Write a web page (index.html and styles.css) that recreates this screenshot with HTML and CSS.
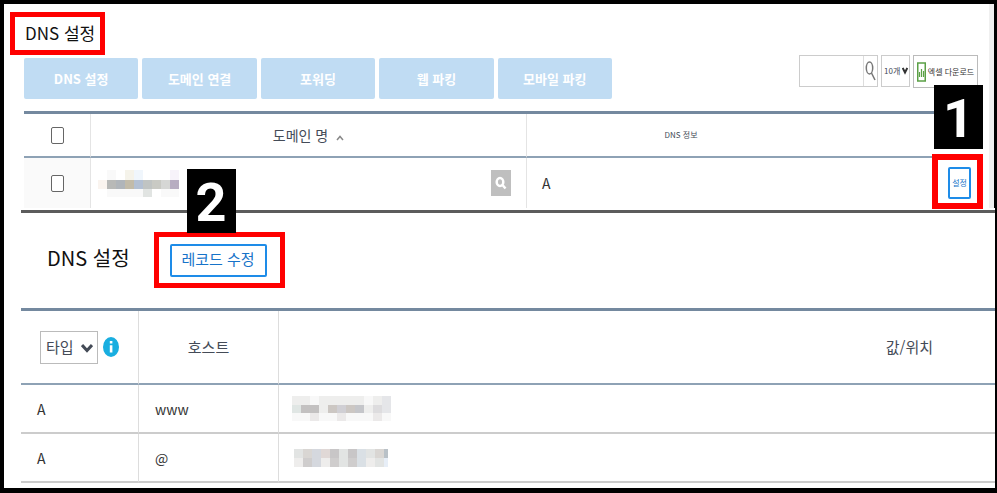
FILE: index.html
```html
<!DOCTYPE html>
<html lang="ko">
<head>
    <meta charset="UTF-8">
    <meta name="viewport" content="width=device-width, initial-scale=1.0">
    <title>DNS 설정</title>
    <link rel="stylesheet" href="styles.css">
</head>
<body>
    <main class="guide">
        <section class="panel domains">
            <h1 class="title highlight">DNS 설정</h1>
            <div class="toolbar">
                <div class="actions">
                    <button type="button" class="action">DNS 설정</button>
                    <button type="button" class="action">도메인 연결</button>
                    <button type="button" class="action">포워딩</button>
                    <button type="button" class="action">웹 파킹</button>
                    <button type="button" class="action">모바일 파킹</button>
                </div>
                <div class="tools">
                    <form class="search">
                        <input type="text" class="search-input" aria-label="검색어">
                        <button type="button" class="search-button" aria-label="검색">
                            <svg width="11" height="22" viewBox="0 0 11 22" fill="none" stroke="#777" stroke-width="1.5">
                                <ellipse cx="4.5" cy="8" rx="3.2" ry="6"/>
                                <path d="M6.5 13L10 20"/>
                            </svg>
                        </button>
                    </form>
                    <div class="select count">
                        <select aria-label="목록 개수">
                            <option>10개</option>
                        </select>
                        <svg width="6" height="8" viewBox="0 0 6 8" fill="none" stroke="#333" stroke-width="2">
                            <path d="M0.7 1L3 5.5L5.3 1"/>
                        </svg>
                    </div>
                    <button type="button" class="excel">
                        <svg width="9" height="20" viewBox="0 0 9 20">
                            <rect x="0.75" y="1" width="7.5" height="18" fill="#fff" stroke="#5ba046" stroke-width="1.5"/>
                            <path d="M2.5 15V10M4.5 15V7M6.5 15V9" stroke="#5ba046" stroke-width="1.2"/>
                        </svg>
                        엑셀 다운로드
                    </button>
                </div>
            </div>
            <table class="domain-table">
                <colgroup>
                    <col class="col-check">
                    <col class="col-name">
                    <col class="col-dns">
                    <col>
                </colgroup>
                <thead>
                    <tr>
                        <th><input type="checkbox" aria-label="전체 선택"></th>
                        <th>
                            도메인 명
                            <svg class="sort" width="8" height="6" viewBox="0 0 8 6" fill="none" stroke="#888" stroke-width="1.5">
                                <path d="M1 5L4 1.5L7 5"/>
                            </svg>
                        </th>
                        <th class="small">DNS 정보</th>
                        <th></th>
                    </tr>
                </thead>
                <tbody>
                    <tr>
                        <td class="check"><input type="checkbox" aria-label="도메인 선택"></td>
                        <td>
                            <div class="domain">
                                <svg width="81" height="27" viewBox="0 0 81 27" shape-rendering="crispEdges">
                                    <path fill="#f9f9f9" d="M9 0h9v27H9zM18 19h27v8H18zM63 19h18v8H63z"/>
                                    <path fill="#f5f3ea" d="M27 0h9v10h-9z"/>
                                    <path fill="#f0f6fc" d="M36 0h9v10h-9z"/>
                                    <path fill="#f7f3fa" d="M72 0h9v10h-9z"/>
                                    <path fill="#faf4ef" d="M0 10h9v9H0z"/>
                                    <path fill="#b8b9b7" d="M9 10h9v9H9z"/>
                                    <path fill="#b0b5ba" d="M18 10h9v9h-9z"/>
                                    <path fill="#c2bba9" d="M27 10h9v9h-9z"/>
                                    <path fill="#b3c0d3" d="M36 10h9v9h-9z"/>
                                    <path fill="#c0c4c3" d="M45 10h9v9h-9z"/>
                                    <path fill="#c9cac4" d="M54 10h9v9h-9z"/>
                                    <path fill="#d6d7d5" d="M63 10h9v9h-9z"/>
                                    <path fill="#b7adc1" d="M72 10h9v9h-9z"/>
                                    <path fill="#e1e4e2" d="M45 19h9v8h-9z"/>
                                </svg>
                                <button type="button" class="lookup" aria-label="조회">
                                    <svg width="12" height="14" viewBox="0 0 12 14" fill="none" stroke="#fff" stroke-width="2.5">
                                        <ellipse cx="5" cy="6" rx="3.3" ry="4"/>
                                        <path d="M7.5 9L10.5 12.5"/>
                                    </svg>
                                </button>
                            </div>
                        </td>
                        <td class="dns">A</td>
                        <td class="setting">
                            <span class="callout">
                                <button type="button" class="outline small">설정</button>
                                <span class="step step-one">1</span>
                            </span>
                        </td>
                    </tr>
                </tbody>
            </table>
        </section>

        <section class="records">
            <header class="records-head">
                <h2 class="title">DNS 설정</h2>
                <div class="edit highlight">
                    <button type="button" class="outline">레코드 수정</button>
                    <span class="step step-two">2</span>
                </div>
            </header>
            <table class="record-table">
                <colgroup>
                    <col class="col-type">
                    <col class="col-host">
                    <col>
                </colgroup>
                <thead>
                    <tr>
                        <th>
                            <div class="type">
                                <div class="select">
                                    <select aria-label="타입">
                                        <option>타입</option>
                                    </select>
                                    <svg width="12" height="10" viewBox="0 0 12 10" fill="none" stroke="#444b57" stroke-width="3">
                                        <path d="M1 2L6 7.5L11 2"/>
                                    </svg>
                                </div>
                                <svg width="16" height="20" viewBox="0 0 16 20">
                                    <ellipse cx="8" cy="10" rx="8" ry="10" fill="#19aee0"/>
                                    <path d="M6.8 4h2.6v2.6H6.8zM6.8 8.2h2.6v7.300H6.8z" fill="#fff"/>
                                </svg>
                            </div>
                        </th>
                        <th>호스트</th>
                        <th class="value">값/위치</th>
                    </tr>
                </thead>
                <tbody>
                    <tr>
                        <td>A</td>
                        <td>www</td>
                        <td>
                            <svg width="99" height="25" viewBox="0 0 99 25" shape-rendering="crispEdges">
                                <path fill="#eeeeed" d="M0 0h99v17H0z"/>
                                <path fill="#f8f8f8" d="M0 17h99v8H0zM18 0h9v9h-9zM72 0h9v9h-9z"/>
                                <path fill="#e0e6e4" d="M0 9h9v8H0z"/>
                                <path fill="#c3c1c1" d="M9 9h18v8H9z"/>
                                <path fill="#ccc7c3" d="M36 9h9v8h-9zM54 9h9v8h-9z"/>
                                <path fill="#d0cfd4" d="M45 9h9v8h-9z"/>
                                <path fill="#c5c6ca" d="M63 9h9v8h-9z"/>
                                <path fill="#dddcde" d="M81 9h9v8h-9z"/>
                                <path fill="#e5e6e9" d="M90 0h9v17h-9z"/>
                                <path fill="#ebe9e9" d="M18 17h9v8h-9zM45 17h9v8h-9zM81 17h9v8h-9z"/>
                            </svg>
                        </td>
                    </tr>
                    <tr>
                        <td>A</td>
                        <td>@</td>
                        <td>
                            <svg width="96" height="18" viewBox="-2 0 96 18" shape-rendering="crispEdges">
                                <path fill="#e2e4e3" d="M0 0h94v18H0z"/>
                                <path fill="#d9d6d3" d="M9 0h9v9H9zM81 0h9v9h-9z"/>
                                <path fill="#d5d8de" d="M18 0h9v18h-9z"/>
                                <path fill="#e0d8d6" d="M27 0h9v9h-9z"/>
                                <path fill="#c8c6c7" d="M36 0h9v9h-9zM54 0h9v9h-9z"/>
                                <path fill="#cfcdcd" d="M9 9h9v9H9zM36 9h9v9h-9zM54 9h9v9h-9z"/>
                                <path fill="#eeedec" d="M0 9h9v9H0zM27 9h9v9h-9zM72 9h9v9h-9z"/>
                                <path fill="#dae0e5" d="M63 0h9v18h-9z"/>
                                <path fill="#b9c1c7" d="M90 0h4v9h-4z"/>
                                <path fill="#e7eef7" d="M90 9h4v9h-4z"/>
                            </svg>
                        </td>
                    </tr>
                </tbody>
            </table>
        </section>
    </main>
</body>
</html>
```
FILE: styles.css
```css
* {
    box-sizing: border-box;
}
body {
    margin: 0;
    background-color: #000;
    color: #333;
    font-family: "Noto Sans CJK KR", sans-serif;
    font-size: 14px;
    line-height: 20px;
}
button, select, input {
    font: inherit;
    margin: 0;
    padding: 0;
}
button {
    cursor: pointer;
}
svg {
    display: block;
    flex: none;
}
table {
    width: 100%;
    border-collapse: separate;
    border-spacing: 0;
    table-layout: fixed;
}
th {
    font-weight: 400;
    color: #444b57;
}
th, td {
    padding: 0;
}
.guide {
    margin: 4px 2px 4px 4px;
    padding-bottom: 5px;
    background: #fff;
}
.title {
    margin: 0;
    color: #111;
    font-size: 20px;
    font-weight: 400;
}
.highlight {
    border: 5px solid #f00;
}
.small {
    font-size: 8px;
}

/* Domain list */
.domains {
    margin-right: 1px;
    padding: 8px 11px 0 20px;
    border-right: 5px solid #f0f0f0;
    box-shadow: 1px 0 #000;
}
.domains .title {
    width: 95px;
    margin-left: -14px;
    padding: 6px 0 7px 10px;
    font-size: 17px;
    white-space: nowrap;
}
.toolbar {
    display: flex;
    justify-content: space-between;
    align-items: flex-start;
    margin: 3px 0 12px;
}
.actions {
    display: flex;
    gap: 4px;
    width: 588px;
}
.action {
    flex: 1;
    height: 41px;
    border: none;
    border-radius: 2px;
    background: #c0dcf3;
    color: #fff;
    font-size: 13px;
    font-weight: 700;
}
.tools {
    display: flex;
    gap: 3px;
    margin-top: -3px;
}
.search {
    display: flex;
    width: 79px;
    height: 32px;
    border: 1px solid #ccc;
}
.search-input {
    flex: 1;
    min-width: 0;
    border: none;
}
.search-button {
    display: flex;
    justify-content: center;
    align-items: center;
    width: 14px;
    border: none;
    border-left: 1px solid #ddd;
    background: #fff;
}
.select {
    position: relative;
}
.select select {
    appearance: none;
    width: 58px;
    height: 33px;
    padding-left: 5px;
    border: 1px solid #bbb;
    border-radius: 0;
    background: #fff;
    color: #444b57;
}
.select svg {
    position: absolute;
    top: 12px;
    right: 5px;
    pointer-events: none;
}
.count select {
    width: 29px;
    height: 32px;
    padding-left: 2px;
    border-color: #ccc;
    font-size: 8px;
}
.count svg {
    right: 2px;
}
.excel {
    display: flex;
    justify-content: center;
    align-items: center;
    gap: 2px;
    width: 65px;
    height: 33px;
    border: 1px solid #bbb;
    background: #fff;
    color: #333;
    font-size: 8px;
    white-space: nowrap;
}
.domain-table {
    border-top: 3px solid #74899f;
}
.col-check {
    width: 67px;
}
.col-name {
    width: 436px;
}
.col-dns {
    width: 308px;
}
.domain-table th {
    height: 44px;
    border-bottom: 2px solid #8ea2b5;
}
.domain-table th:nth-child(-n+2), .domain-table td:nth-child(-n+2) {
    border-right: 1px solid #e4e4e4;
}
.domain-table td {
    height: 50px;
}
.domain-table input {
    display: block;
    width: 13px;
    height: 17px;
    margin: 0 auto;
    appearance: none;
    border: 1px solid #666;
    border-radius: 2px;
    background: #fff;
}
.domain-table input:checked {
    background: #1e8ce8;
}
.check {
    background: #fafafa;
}
.sort {
    display: inline;
    margin-left: 4px;
}
.domain {
    display: flex;
    justify-content: space-between;
    align-items: center;
    padding: 0 15px 0 7px;
}
.lookup {
    display: flex;
    justify-content: center;
    align-items: center;
    width: 20px;
    height: 26px;
    border: none;
    background: #bfbfbf;
}
.dns {
    padding-left: 15px;
}
.setting {
    text-align: right;
}
.callout {
    position: relative;
    display: inline-block;
    margin-right: 7px;
    vertical-align: middle;
}
.callout::after {
    content: "";
    position: absolute;
    inset: -13px -12px -10px -16px;
    border: 6px solid #f00;
    pointer-events: none;
}
.outline {
    border: 2px solid #1e8ce8;
    border-radius: 2px;
    background: #fff;
    color: #1673c9;
}
.callout .outline {
    display: block;
    width: 23px;
    height: 32px;
}

/* Numbered steps lie over the screens */
.step {
    position: absolute;
    z-index: 1;
    width: 49px;
    height: 64px;
    background: #000;
    color: #fff;
    font: 700 54px/68px Roboto, sans-serif;
    text-align: center;
}
.step-one {
    right: -12px;
    bottom: 50px;
}
.step-two {
    bottom: 50px;
    left: 28px;
}

/* Record list */
.records {
    margin: 2px 0 0 17px;
    border-top: 3px solid #5c5c5c;
}
.records-head {
    display: flex;
    align-items: center;
    gap: 24px;
    padding: 19px 0 20px 26px;
}
.records-head .title {
    padding-bottom: 5px;
}
.edit {
    position: relative;
    padding: 7px 13px 6px 11px;
}
.edit .outline {
    display: block;
    width: 97px;
    height: 33px;
    padding-bottom: 3px;
    font-size: 15px;
}
.record-table {
    border-top: 3px solid #74899f;
    font-size: 15px;
}
.col-type {
    width: 118px;
}
.col-host {
    width: 140px;
}
.record-table th {
    height: 74px;
    border-bottom: 2px solid #8ea2b5;
}
.record-table td {
    height: 49px;
    padding-left: 16px;
    border-bottom: 2px solid #ccc;
    font-size: 14px;
}
.record-table td:last-child {
    padding-left: 13px;
}
.record-table th:not(:last-child), .record-table td:not(:last-child) {
    border-right: 1px solid #ddd;
}
.record-table .value {
    padding-right: 62px;
    text-align: right;
}
.type {
    display: flex;
    align-items: center;
    gap: 5px;
    padding-left: 19px;
}
```
